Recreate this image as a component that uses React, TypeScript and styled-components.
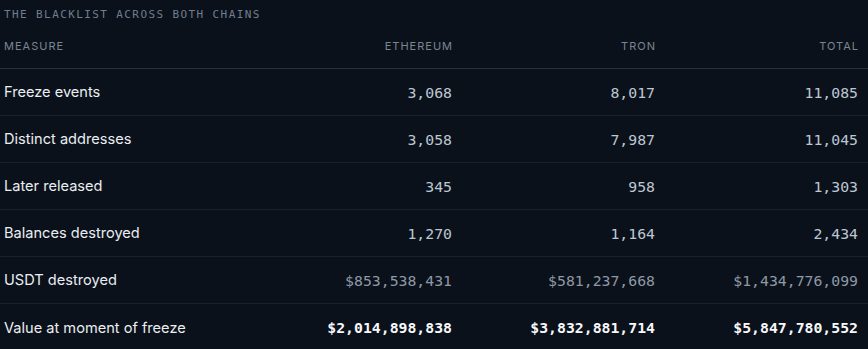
import React from 'react';
import styled, { createGlobalStyle } from 'styled-components';

const GlobalStyle = createGlobalStyle`
  *, *::before, *::after {
    box-sizing: border-box;
  }
  html, body {
    margin: 0;
    padding: 0;
    background: #0b111b;
  }
`;

const colors = {
  bg: '#0b111b',
  title: '#6f7e8f',
  head: '#7a8592',
  headLine: '#2a303a',
  rowLine: '#1a212b',
  label: '#eaeef2',
  num: '#bdc7d2',
  dim: '#8e99a6',
  strong: '#f6f8fa',
};

const mono = `'DejaVu Sans Mono', 'Liberation Mono', monospace`;
const sans = `Inter, 'Noto Sans', Arial, sans-serif`;

const Wrap = styled.section`
  width: 868px;
  height: 349px;
  background: ${colors.bg};
  overflow: hidden;
`;

const Title = styled.h2`
  margin: 0;
  padding-left: 4px;
  font-family: ${mono};
  font-size: 11px;
  font-weight: 400;
  line-height: 29px;
  letter-spacing: 1.4px;
  color: ${colors.title};
`;

const Table = styled.div`
  display: grid;
  grid-template-columns: 259px 203px 203px 203px;
`;

const HeadCell = styled.div<{ $num?: boolean }>`
  height: 40px;
  padding: 0 ${(p) => (p.$num ? '9px' : '0')} 5px ${(p) => (p.$num ? '0' : '4px')};
  display: flex;
  align-items: center;
  justify-content: ${(p) => (p.$num ? 'flex-end' : 'flex-start')};
  border-bottom: 1px solid ${colors.headLine};
  font-family: ${sans};
  font-size: 11px;
  letter-spacing: 1px;
  color: ${colors.head};
`;

type Tone = 'normal' | 'dim' | 'strong';

const Label = styled.div<{ $last?: boolean }>`
  height: 47px;
  padding-left: 4px;
  display: flex;
  align-items: center;
  border-bottom: ${(p) => (p.$last ? 'none' : `1px solid ${colors.rowLine}`)};
  font-family: ${sans};
  font-size: 14.6px;
  color: ${colors.label};
`;

const Num = styled.div<{ $tone: Tone; $last?: boolean }>`
  height: 47px;
  padding-right: 10px;
  display: flex;
  align-items: center;
  justify-content: flex-end;
  border-bottom: ${(p) => (p.$last ? 'none' : `1px solid ${colors.rowLine}`)};
  font-family: ${mono};
  font-size: 14.8px;
  font-weight: ${(p) => (p.$tone === 'strong' ? 700 : 400)};
  color: ${(p) =>
    p.$tone === 'strong' ? colors.strong : p.$tone === 'dim' ? colors.dim : colors.num};
`;

const rows: { label: string; values: string[]; tone: Tone }[] = [
  { label: 'Freeze events', values: ['3,068', '8,017', '11,085'], tone: 'normal' },
  { label: 'Distinct addresses', values: ['3,058', '7,987', '11,045'], tone: 'normal' },
  { label: 'Later released', values: ['345', '958', '1,303'], tone: 'normal' },
  { label: 'Balances destroyed', values: ['1,270', '1,164', '2,434'], tone: 'normal' },
  {
    label: 'USDT destroyed',
    values: ['$853,538,431', '$581,237,668', '$1,434,776,099'],
    tone: 'dim',
  },
  {
    label: 'Value at moment of freeze',
    values: ['$2,014,898,838', '$3,832,881,714', '$5,847,780,552'],
    tone: 'strong',
  },
];

export default function App() {
  return (
    <>
      <GlobalStyle />
      <Wrap>
        <Title>THE BLACKLIST ACROSS BOTH CHAINS</Title>
        <Table>
          <HeadCell>MEASURE</HeadCell>
          <HeadCell $num>ETHEREUM</HeadCell>
          <HeadCell $num>TRON</HeadCell>
          <HeadCell $num>TOTAL</HeadCell>
          {rows.map((row, i) => {
            const last = i === rows.length - 1;
            return (
              <React.Fragment key={row.label}>
                <Label $last={last}>{row.label}</Label>
                {row.values.map((v, j) => (
                  <Num key={j} $tone={row.tone} $last={last}>
                    {v}
                  </Num>
                ))}
              </React.Fragment>
            );
          })}
        </Table>
      </Wrap>
    </>
  );
}
